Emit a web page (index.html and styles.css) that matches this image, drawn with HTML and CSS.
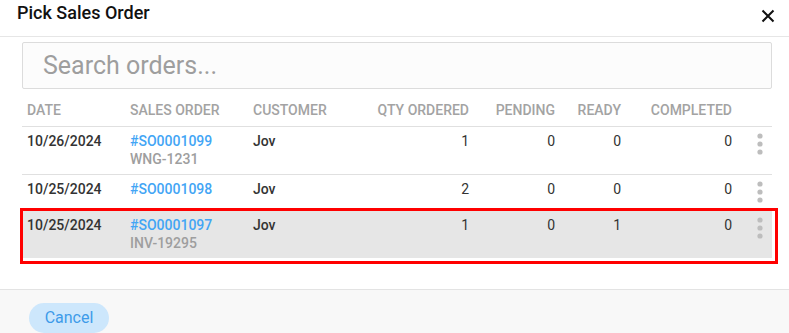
FILE: index.html
```html
<!DOCTYPE html>
<html lang="en">
<head>
  <meta charset="UTF-8">
  <title>Pick Sales Order</title>
  <link rel="stylesheet" href="styles.css">
</head>
<body>

  <div class="dialog">
    <div class="dialog-header">
      <h1 class="dialog-title">Pick Sales Order</h1>
      <svg class="close-icon" width="14" height="14" viewBox="0 0 14 14">
        <path d="M1.5 1.5 L12.5 12.5 M12.5 1.5 L1.5 12.5" stroke="#111" stroke-width="2" fill="none"/>
      </svg>
    </div>

    <div class="dialog-body">
      <input class="search" type="text" placeholder="Search orders...">

      <div class="table-wrap">
        <table class="orders">
          <colgroup>
            <col class="col-date">
            <col class="col-order">
            <col class="col-customer">
            <col class="col-qty">
            <col class="col-pending">
            <col class="col-ready">
            <col class="col-completed">
            <col class="col-action">
          </colgroup>
          <thead>
            <tr>
              <th>Date</th>
              <th>Sales Order</th>
              <th>Customer</th>
              <th class="num">Qty Ordered</th>
              <th class="num">Pending</th>
              <th class="num">Ready</th>
              <th class="num">Completed</th>
              <th></th>
            </tr>
          </thead>
          <tbody>
            <tr>
              <td class="strong">10/26/2024</td>
              <td>
                <a class="order-link">#SO0001099</a>
                <span class="order-ref">WNG-1231</span>
              </td>
              <td class="strong">Jov</td>
              <td class="num">1</td>
              <td class="num">0</td>
              <td class="num">0</td>
              <td class="num">0</td>
              <td class="action"><svg class="dots" width="24" height="24" viewBox="0 0 24 24"><circle cx="12" cy="4" r="2.6"/><circle cx="12" cy="12" r="2.6"/><circle cx="12" cy="20" r="2.6"/></svg></td>
            </tr>
            <tr>
              <td class="strong">10/25/2024</td>
              <td>
                <a class="order-link">#SO0001098</a>
              </td>
              <td class="strong">Jov</td>
              <td class="num">2</td>
              <td class="num">0</td>
              <td class="num">0</td>
              <td class="num">0</td>
              <td class="action"><svg class="dots" width="24" height="24" viewBox="0 0 24 24"><circle cx="12" cy="4" r="2.6"/><circle cx="12" cy="12" r="2.6"/><circle cx="12" cy="20" r="2.6"/></svg></td>
            </tr>
            <tr class="selected">
              <td class="strong">10/25/2024</td>
              <td>
                <a class="order-link">#SO0001097</a>
                <span class="order-ref">INV-19295</span>
              </td>
              <td class="strong">Jov</td>
              <td class="num">1</td>
              <td class="num">0</td>
              <td class="num">1</td>
              <td class="num">0</td>
              <td class="action"><svg class="dots" width="24" height="24" viewBox="0 0 24 24"><circle cx="12" cy="4" r="2.6"/><circle cx="12" cy="12" r="2.6"/><circle cx="12" cy="20" r="2.6"/></svg></td>
            </tr>
          </tbody>
        </table>
        <!-- red annotation frame drawn over the selected row -->
        <div class="highlight-frame"></div>
      </div>
    </div>

    <div class="dialog-footer">
      <button class="btn-cancel">Cancel</button>
    </div>
  </div>

</body>
</html>
```

FILE: styles.css
```css
body {
  margin: 0;
  font-family: 'Roboto', 'Liberation Sans', sans-serif;
  background: white;
  color: #333;
}

.dialog {
  width: 789px;
  height: 333px;
  display: flex;
  flex-direction: column;
  overflow: hidden;
}

.dialog-header {
  display: flex;
  justify-content: space-between;
  align-items: flex-start;
  height: 37px;
  box-sizing: border-box;
  padding: 3px 14px 0 17px;
  border-bottom: 1px solid #e6e6e6;
}

.dialog-title {
  margin: 0;
  font-size: 18px;
  line-height: 20px;
  font-weight: 500;
  color: #111;
}

.close-icon {
  margin-top: 6px;
}

.dialog-body {
  flex: 1;
  padding: 5px 17px 0 22px;
}

.search {
  display: block;
  width: 100%;
  height: 47px;
  box-sizing: border-box;
  border: 1px solid #dcdcdc;
  border-radius: 2px;
  background: #fcfcfc;
  padding: 0 20px;
  font-family: inherit;
  font-size: 25px;
  color: #333;
  outline: none;
}

.search::placeholder {
  color: #9e9e9e;
}

.table-wrap {
  position: relative;
  margin-top: 7px;
}

.orders {
  width: 100%;
  border-collapse: collapse;
  table-layout: fixed;
}

.col-date { width: 103px; }
.col-order { width: 123px; }
.col-customer { width: 100px; }
.col-qty { width: 126px; }
.col-pending { width: 86px; }
.col-ready { width: 66px; }
.col-completed { width: 111px; }
.col-action { width: 35px; }

.orders th {
  text-align: left;
  font-size: 14px;
  line-height: 18px;
  font-weight: 500;
  text-transform: uppercase;
  color: #a3a3a3;
  padding: 5px 5px 7px 5px;
  border-bottom: 1px solid #e0e0e0;
  white-space: nowrap;
}

.orders td {
  font-size: 14px;
  line-height: 18px;
  padding: 5px 5px 6px 5px;
  vertical-align: top;
  border-bottom: 1px solid #e0e0e0;
  color: #333;
}

.orders tbody tr:last-child td {
  border-bottom: none;
}

.orders .num {
  text-align: right;
}

.strong {
  font-weight: 500;
}

.order-link {
  display: block;
  color: #42a5f5;
  font-weight: 500;
  text-decoration: none;
}

.order-ref {
  display: block;
  color: #9e9e9e;
  font-weight: 500;
}

.orders td.action {
  padding-right: 0;
  padding-left: 0;
}

.dots {
  display: block;
  margin-left: auto;
  fill: #bdbdbd;
}

.selected td {
  background: #e6e6e6;
}

.highlight-frame {
  position: absolute;
  left: -2px;
  bottom: -6px;
  right: -6px;
  height: 56px;
  border: 3px solid #f00;
  box-sizing: border-box;
  pointer-events: none;
}

.dialog-footer {
  border-top: 1px solid #e3e3e3;
  background: #f8f8f8;
  height: 44px;
  box-sizing: border-box;
  padding: 13px 0 0 29px;
}

.btn-cancel {
  background: #cde7fc;
  color: #3d9be9;
  font-family: inherit;
  font-size: 16px;
  line-height: 18px;
  height: 30px;
  width: 80px;
  padding: 0;
  vertical-align: top;
  border: none;
  border-radius: 16px;
  cursor: pointer;
}
```
